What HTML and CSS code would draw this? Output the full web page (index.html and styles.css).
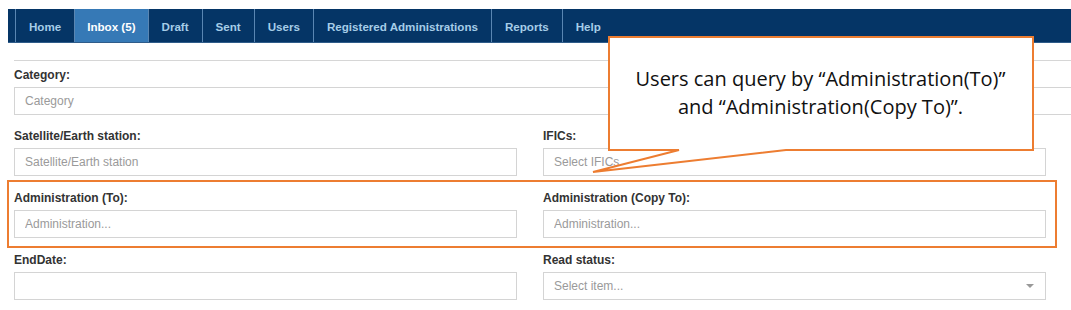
FILE: index.html
```html
<!DOCTYPE html>
<html lang="en">
<head>
    <meta charset="UTF-8">
    <meta name="viewport" content="width=device-width, initial-scale=1.0">
    <title>Inbox - Search</title>
    <link rel="stylesheet" href="styles.css">
</head>
<body>
    <ul class="main-nav">
        <li class="nav-stub"></li>
        <li><a href="#">Home</a></li>
        <li class="active"><a href="#">Inbox (5)</a></li>
        <li><a href="#">Draft</a></li>
        <li><a href="#">Sent</a></li>
        <li><a href="#">Users</a></li>
        <li><a href="#">Registered Administrations</a></li>
        <li><a href="#">Reports</a></li>
        <li class="last"><a href="#">Help</a></li>
    </ul>

    <div class="search-form">
        <div class="form-group wide">
            <label>Category:</label>
            <input type="text" placeholder="Category">
        </div>

        <div class="form-row">
            <div class="form-group">
                <label>Satellite/Earth station:</label>
                <input type="text" placeholder="Satellite/Earth station">
            </div>
            <div class="form-group">
                <label>IFICs:</label>
                <input type="text" placeholder="Select IFICs">
            </div>
        </div>

        <div class="form-row highlight">
            <div class="form-group">
                <label>Administration (To):</label>
                <input type="text" placeholder="Administration...">
            </div>
            <div class="form-group">
                <label>Administration (Copy To):</label>
                <input type="text" placeholder="Administration...">
            </div>
        </div>

        <div class="form-row">
            <div class="form-group">
                <label>EndDate:</label>
                <input type="text">
            </div>
            <div class="form-group">
                <label>Read status:</label>
                <div class="select-box">
                    <span>Select item...</span>
                    <span class="caret"></span>
                </div>
            </div>
        </div>
    </div>

    <div class="callout">
        <svg class="callout-shape" width="450" height="150" viewBox="0 0 450 150">
            <path d="M19 7 H443 V120 H196 L3 142 L89 120 H19 Z" fill="#fff" stroke="#ed7d31" stroke-width="2" stroke-linejoin="miter"/>
        </svg>
        <div class="callout-text">Users can query by “Administration(To)”<br>and “Administration(Copy To)”.</div>
    </div>
</body>
</html>
```

FILE: styles.css
```css
body {
    margin: 0;
    font-family: "Liberation Sans", Arial, sans-serif;
    font-size: 12px;
    color: #333;
    background-color: #fff;
    overflow: hidden;
    position: relative;
    height: 310px;
}

/* top navigation */
.main-nav {
    list-style: none;
    margin: 9px 0 0 8px;
    padding: 0;
    display: flex;
    height: 33px;
    background-color: #053566;
    border-bottom: 1px solid #2f5c8a;
}

.main-nav li {
    border-right: 1px solid #5a86b2;
}

.main-nav li.last {
    border-right: none;
}

.main-nav .nav-stub {
    width: 7px;
}

.main-nav a {
    display: block;
    height: 33px;
    line-height: 35px;
    padding: 0 13px;
    font-weight: bold;
    font-size: 11.6px;
    color: #a6cde8;
    text-decoration: none;
}

.main-nav li.active {
    background-color: #3679b6;
}

.main-nav li.active a {
    color: #fff;
    padding: 0 12px;
}

/* search form */
.search-form {
    margin: 17px 0 0 14px;
    border-top: 1px solid #d6d6d6;
    padding-top: 6px;
}

.form-group label {
    display: block;
    font-weight: bold;
    font-size: 12px;
    line-height: 16px;
    margin-bottom: 4px;
    color: #333;
}

.form-group input,
.select-box {
    display: block;
    box-sizing: border-box;
    width: 100%;
    height: 28px;
    border: 1px solid #d4d4d4;
    padding: 0 10px;
    font-family: "Liberation Sans", Arial, sans-serif;
    font-size: 12px;
    color: #333;
    background: #fff;
    margin: 0;
}

.form-group input::placeholder {
    color: #9a9a9a;
}

.form-group.wide input {
    width: 1100px;
}

.form-group.wide {
    margin-bottom: 13px;
}

.form-row {
    display: grid;
    grid-template-columns: 503px 503px;
    column-gap: 26px;
    margin-bottom: 4px;
}

.form-row.highlight {
    margin-left: -7px;
    width: 1050px;
    box-sizing: border-box;
    border: 2px solid #ed7d31;
    padding: 8px 11px 8px 5px;
}

.select-box {
    display: flex;
    align-items: center;
    justify-content: space-between;
    color: #9a9a9a;
}

.select-box .caret {
    width: 0;
    height: 0;
    border-left: 4px solid transparent;
    border-right: 4px solid transparent;
    border-top: 4px solid #999;
    margin-right: 1px;
}

/* annotation callout */
.callout {
    position: absolute;
    left: 590px;
    top: 30px;
    width: 450px;
    height: 150px;
}

.callout-shape {
    position: absolute;
    left: 0;
    top: 0;
}

.callout-text {
    position: absolute;
    left: 18px;
    top: 6px;
    width: 425px;
    height: 114px;
    display: flex;
    align-items: center;
    justify-content: center;
    text-align: center;
    font-family: "Open Sans", sans-serif;
    font-size: 20px;
    line-height: 28px;
    color: #111;
}
```
